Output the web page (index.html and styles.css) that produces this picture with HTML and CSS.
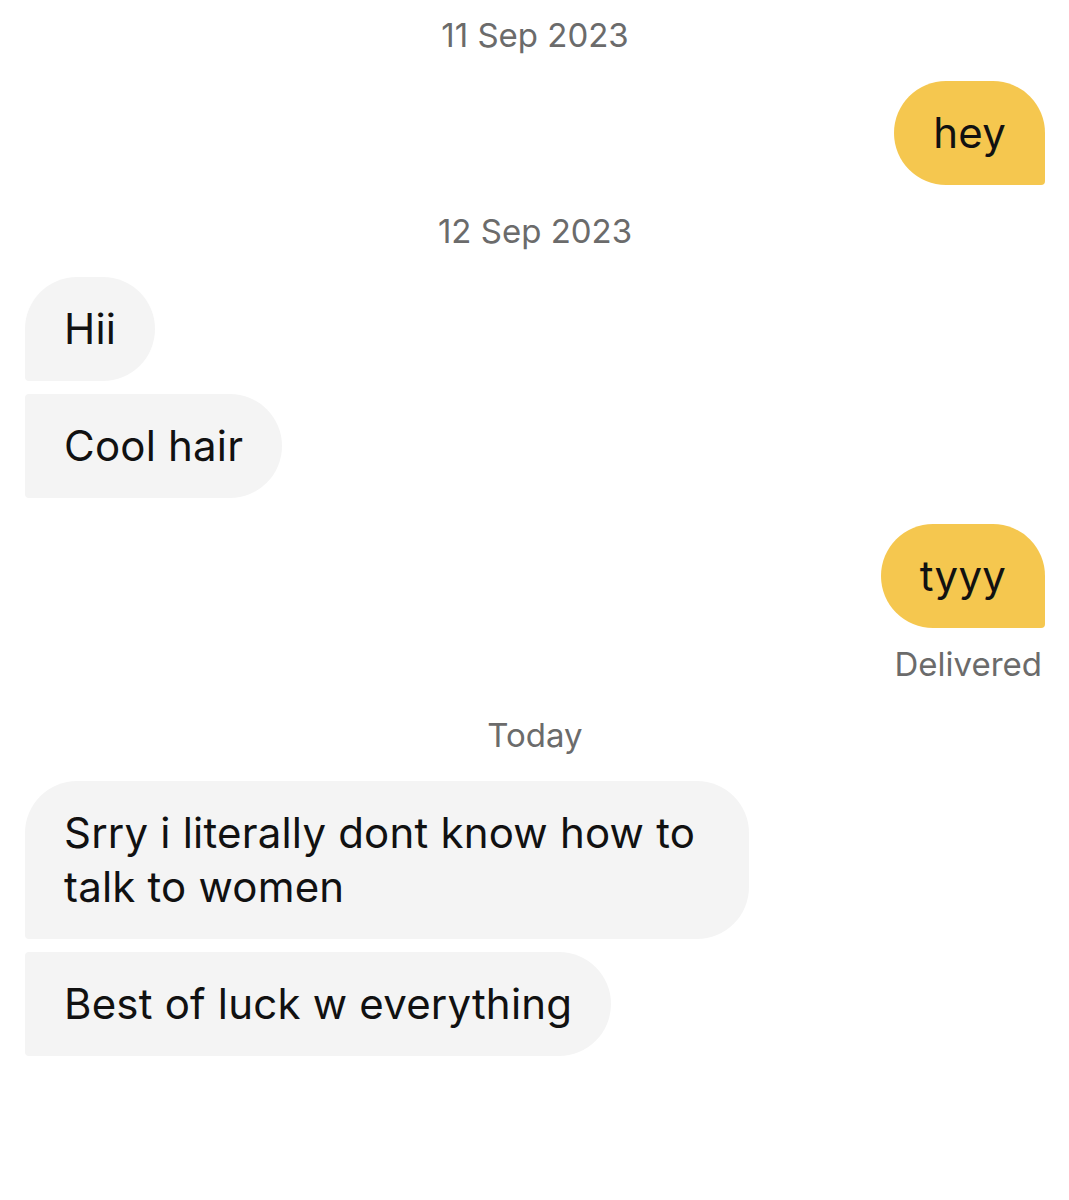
FILE: index.html
```html
<!DOCTYPE html>
<html lang="en">
<head>
  <meta charset="UTF-8">
  <meta name="viewport" content="width=device-width, initial-scale=1.0">
  <title>Chat</title>
  <link rel="stylesheet" href="styles.css">
</head>
<body>
  <div class="chat">
    <div class="date">11 Sep 2023</div>
    <div class="msg sent">hey</div>

    <div class="date">12 Sep 2023</div>
    <div class="msg received">Hii</div>
    <div class="msg received grouped">Cool hair</div>

    <div class="msg sent">tyyy</div>
    <div class="status">Delivered</div>

    <div class="date">Today</div>
    <div class="msg received wide">Srry i literally dont know how to talk to women</div>
    <div class="msg received grouped">Best of luck w everything</div>
  </div>
</body>
</html>
```

FILE: styles.css
```css
body {
  margin: 0;
  padding: 0;
  background-color: #fff;
  font-family: Inter, "Noto Sans", sans-serif;
}

.chat {
  display: flex;
  flex-direction: column;
  padding: 15px 24px 0 25px;
}

.date {
  font-family: Inter, "Liberation Sans", sans-serif;
  text-align: center;
  font-size: 33px;
  line-height: 40px;
  color: #6b6b6b;
  margin-bottom: 26px;
}

.msg {
  font-size: 42px;
  line-height: 54px;
  letter-spacing: 0.2px;
  padding: 25px 39px;
  color: #111;
  margin-bottom: 26px;
}

.sent {
  align-self: flex-end;
  background-color: #f5c74f;
  border-radius: 52px 52px 4px 52px;
}

.received {
  align-self: flex-start;
  background-color: #f4f4f4;
  border-radius: 52px 52px 52px 4px;
}

/* next bubble in a row from the same person */
.received:has(+ .grouped) {
  margin-bottom: 13px;
}

.grouped {
  border-radius: 4px 52px 52px 4px;
}

.wide {
  max-width: 646px;
}

.status {
  align-self: flex-end;
  font-family: Inter, "Liberation Sans", sans-serif;
  font-size: 33px;
  line-height: 40px;
  color: #6b6b6b;
  margin-top: -10px;
  margin-right: 3px;
  margin-bottom: 31px;
}
```
